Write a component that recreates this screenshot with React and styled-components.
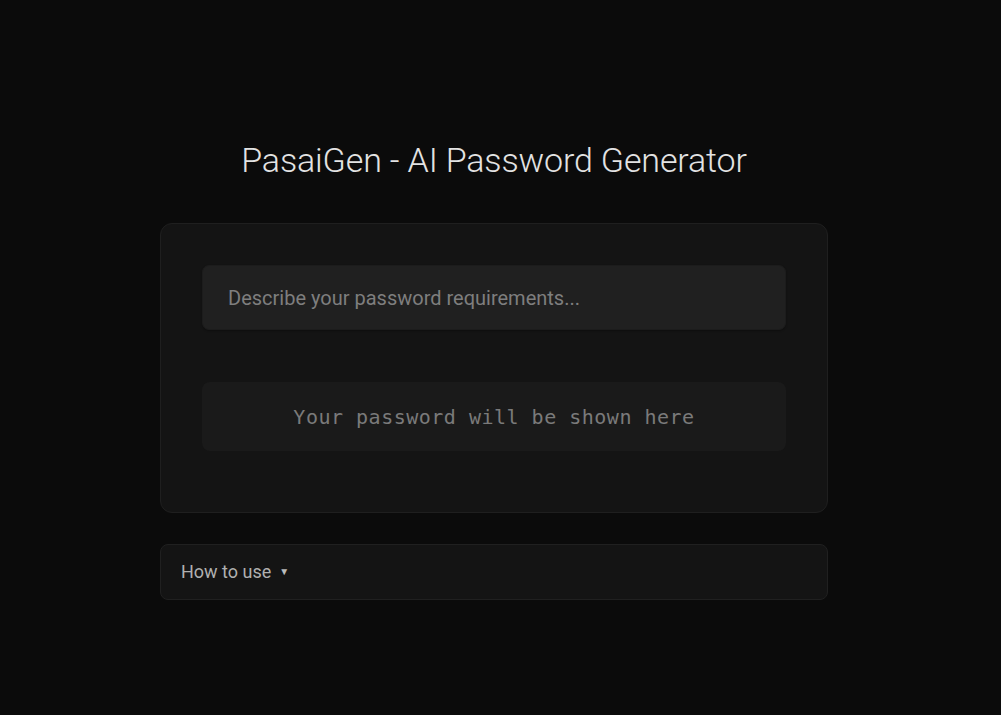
import React, { useState } from 'react';
import styled, { createGlobalStyle } from 'styled-components';

const GlobalStyle = createGlobalStyle`
  html, body {
    margin: 0;
    padding: 0;
    background: #0b0b0b;
  }
  body {
    font-family: Roboto, "Liberation Sans", sans-serif;
    color: #e0e0e0;
  }
`;

const Page = styled.div`
  min-height: 715px;
  padding: 139px 13px 0 0;
  box-sizing: border-box;
  display: flex;
  flex-direction: column;
  align-items: center;
`;

const Title = styled.h1`
  margin: 0 0 41px;
  font-size: 34px;
  font-weight: 300;
  line-height: 43px;
  color: #e3e3e3;
  letter-spacing: -0.15px;
`;

const Card = styled.div`
  width: 668px;
  box-sizing: border-box;
  padding: 41px 41px 61px;
  background: #141414;
  border: 1px solid #1f1f1f;
  border-radius: 12px;
  display: flex;
  flex-direction: column;
  gap: 52px;
`;

const Input = styled.input`
  height: 65px;
  box-sizing: border-box;
  padding: 0 25px;
  background: #202020;
  border: 1px solid #1c1c1c;
  border-radius: 7px;
  font-family: Roboto, "Liberation Sans", sans-serif;
  font-size: 20px;
  color: #ddd;
  outline: none;
  box-shadow: 0 1px 2px rgba(0, 0, 0, 0.3);

  &::placeholder {
    color: #7e7e7e;
  }
`;

const Output = styled.div`
  height: 69px;
  background: #1a1a1a;
  border-radius: 8px;
  display: flex;
  align-items: center;
  justify-content: center;
  font-family: "DejaVu Sans Mono", "Liberation Mono", monospace;
  font-size: 20px;
  letter-spacing: 0.5px;
  color: #7a7a7a;
`;

const Help = styled.div`
  margin-top: 31px;
  width: 668px;
  box-sizing: border-box;
  height: 56px;
  background: #141414;
  border: 1px solid #202020;
  border-radius: 8px;
  padding: 0 20px 2px;
  display: flex;
  align-items: center;
  gap: 8px;
  font-size: 18px;
  color: #b0b0b0;
  cursor: pointer;
`;

const Caret = styled.span`
  font-size: 10px;
  color: #bbb;
  margin-top: 1px;
`;

export default function App() {
  const [text, setText] = useState('');

  return (
    <>
      <GlobalStyle />
      <Page>
        <Title>PasaiGen - AI Password Generator</Title>
        <Card>
          <Input
            value={text}
            onChange={(e) => setText(e.target.value)}
            placeholder="Describe your password requirements..."
          />
          <Output>Your password will be shown here</Output>
        </Card>
        <Help>
          How to use <Caret>▼</Caret>
        </Help>
      </Page>
    </>
  );
}
